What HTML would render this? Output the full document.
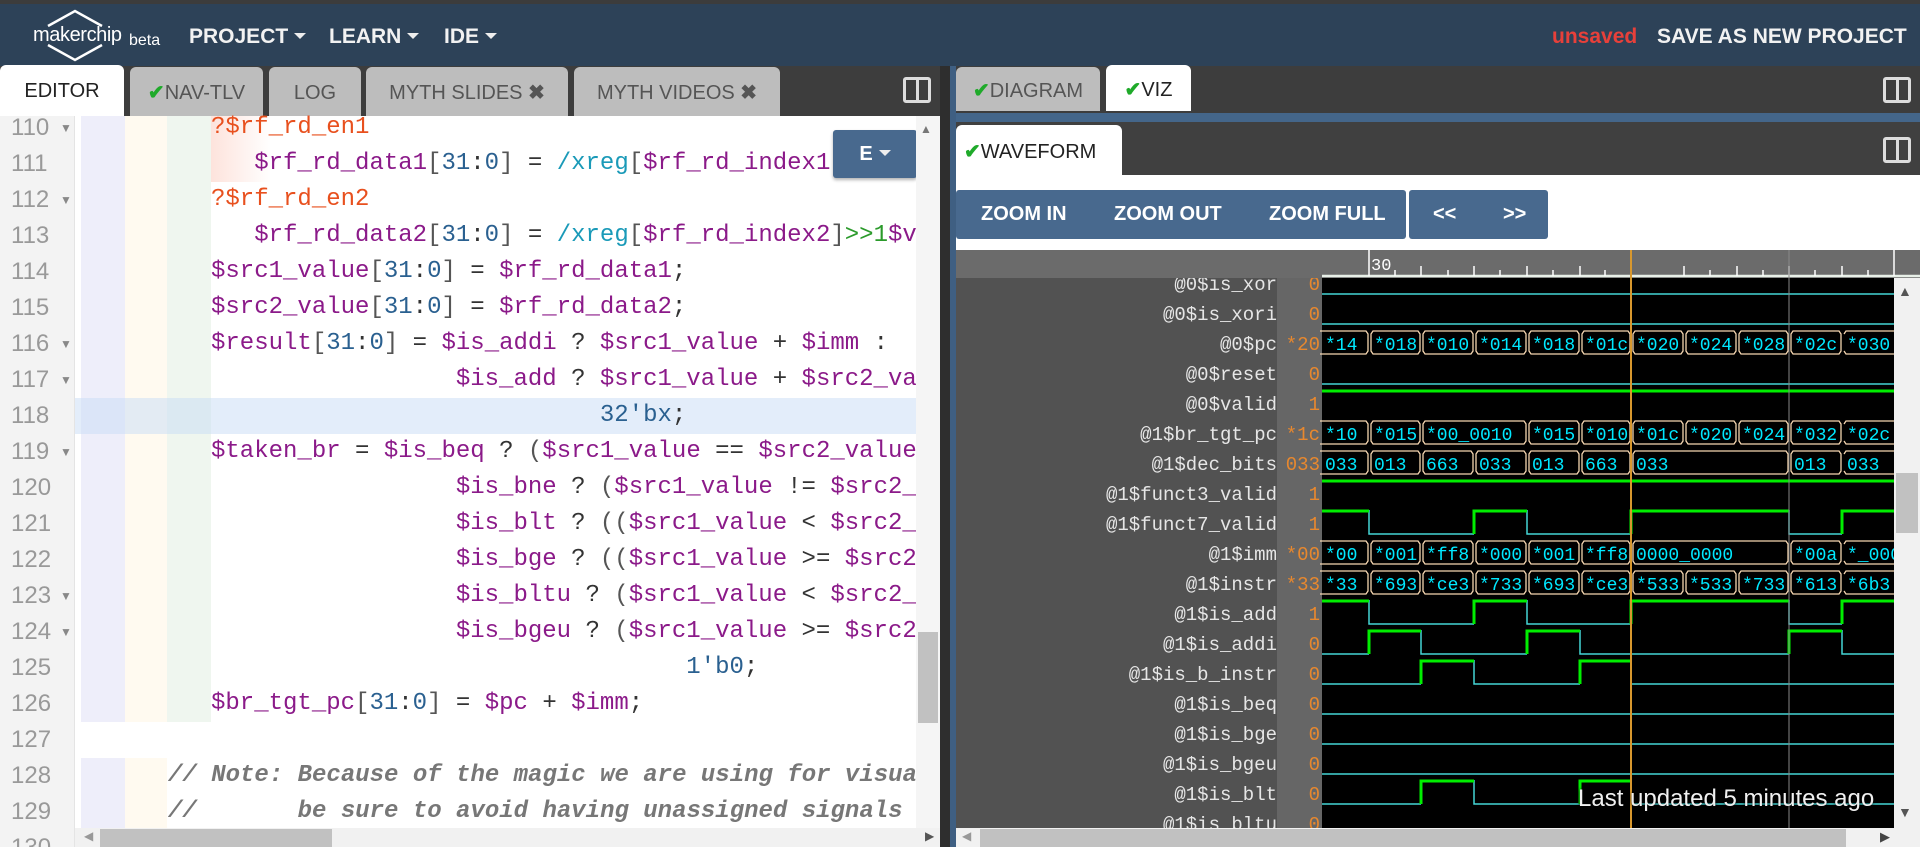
<!DOCTYPE html>
<html><head><meta charset="utf-8"><style>
*{margin:0;padding:0;box-sizing:border-box}
body{width:1920px;height:847px;overflow:hidden;position:relative;background:#3a3a3a;font-family:"Liberation Sans",sans-serif}
.a{position:absolute}
.nav{left:0;top:0;width:1920px;height:66px;background:#2d4258;border-top:4px solid #3c3c3c}
.nv{color:#f2f2f2;font-weight:bold;font-size:21px;top:25px}
.car{display:inline-block;width:0;height:0;border-left:6px solid transparent;border-right:6px solid transparent;border-top:6px solid #eee;vertical-align:middle;margin-left:6px;margin-top:-3px}
.tab{top:67px;height:49px;background:#bdbdbd;border-radius:6px 6px 0 0;color:#555;font-size:20px;line-height:52px;text-align:center}
.tab.w{background:#fff;color:#222;top:65px;height:51px}
.ck{color:#1faa2a;font-weight:bold}
.code{font-family:"Liberation Mono",monospace;font-size:24px;white-space:pre;line-height:36px;height:36px}
.ln{font-size:24px;color:#999;left:11px;line-height:36px;height:36px}
.fd{font-size:12px;color:#888;left:60px;line-height:36px}
.p{color:#8b1a89}.n{color:#2a6090}.g{color:#555}.t{color:#1a9ab8}.r{color:#e8501e}.gr{color:#2b9a2b}.o{color:#333}
.cm{color:#777;font-style:italic;font-weight:bold}
.btn{background:#48698e;border-radius:3px;color:#fff;font-weight:bold;font-size:20px;line-height:49px}
.nm{font-family:"Liberation Mono",monospace;font-size:19px;color:#e6e6e6;right:643px;line-height:30px;height:30px;white-space:pre}
.vl{font-family:"Liberation Mono",monospace;font-size:19px;color:#e8882e;right:600px;line-height:30px;height:30px}
.icon{width:28px;height:26px;border:3px solid #ddd;border-radius:3px}
.icon:after{content:"";position:absolute;left:10px;top:0;width:3px;height:20px;background:#ddd}
</style></head><body>
<div class="a nav"></div>
<svg class="a" style="left:0;top:0" width="170" height="66"><path d="M48 26 L75 11 L102 26 M48 45 L75 60 L102 45" stroke="#fff" stroke-width="2.5" fill="none"/></svg>
<div class="a" style="left:33px;top:24px;color:#fff;font-size:20px;letter-spacing:-0.4px">makerchip</div>
<div class="a" style="left:129px;top:32px;color:#fff;font-size:16px">beta</div>
<div class="a nv" style="left:189px">PROJECT<span class="car"></span></div>
<div class="a nv" style="left:329px">LEARN<span class="car"></span></div>
<div class="a nv" style="left:444px">IDE<span class="car"></span></div>
<div class="a" style="left:1552px;top:25px;color:#e8403a;font-size:21px;font-weight:bold">unsaved</div>
<div class="a nv" style="left:1657px">SAVE AS NEW PROJECT</div>

<div class="a" style="left:0;top:66px;width:940px;height:50px;background:#3d3d3d"></div>
<div class="a tab w" style="left:0;width:124px">EDITOR</div>
<div class="a tab" style="left:130px;width:133px"><span class="ck">✔</span>NAV-TLV</div>
<div class="a tab" style="left:269px;width:92px">LOG</div>
<div class="a tab" style="left:366px;width:202px">MYTH SLIDES <b style="color:#555">✖</b></div>
<div class="a tab" style="left:574px;width:206px">MYTH VIDEOS <b style="color:#555">✖</b></div>
<div class="a icon" style="left:903px;top:77px"></div>

<div class="a" style="left:0;top:116px;width:940px;height:731px;background:#fff;overflow:hidden">
 <div class="a" style="left:0;top:0;width:75px;height:731px;background:#f3f3f3;border-right:1px solid #e4e4e4"></div>
 <div class="a" style="left:81px;top:-6px;width:44px;height:612px;background:#eeeefa"></div>
 <div class="a" style="left:125px;top:-6px;width:42px;height:612px;background:#fffaf0"></div>
 <div class="a" style="left:167px;top:-6px;width:44px;height:612px;background:#eff6ef"></div>
 <div class="a" style="left:81px;top:642px;width:44px;height:90px;background:#eeeefa"></div>
 <div class="a" style="left:125px;top:642px;width:42px;height:90px;background:#fffaf0"></div>
 <div class="a" style="left:211px;top:-6px;width:60px;height:72px;background:linear-gradient(90deg,#fde3dc,#fff)"></div>
 <div class="a" style="left:75px;top:282px;width:841px;height:36px;background:rgba(200,220,245,0.5)"></div>
</div>
<div class="a" style="left:0;top:110px;width:940px;height:737px;overflow:hidden">
<div class="a ln" style="top:0">110</div><div class="a fd" style="top:0">▼</div>
<div class="a ln" style="top:36px">111</div>
<div class="a ln" style="top:72px">112</div><div class="a fd" style="top:72px">▼</div>
<div class="a ln" style="top:108px">113</div>
<div class="a ln" style="top:144px">114</div>
<div class="a ln" style="top:180px">115</div>
<div class="a ln" style="top:216px">116</div><div class="a fd" style="top:216px">▼</div>
<div class="a ln" style="top:252px">117</div><div class="a fd" style="top:252px">▼</div>
<div class="a ln" style="top:288px">118</div>
<div class="a ln" style="top:324px">119</div><div class="a fd" style="top:324px">▼</div>
<div class="a ln" style="top:360px">120</div>
<div class="a ln" style="top:396px">121</div>
<div class="a ln" style="top:432px">122</div>
<div class="a ln" style="top:468px">123</div><div class="a fd" style="top:468px">▼</div>
<div class="a ln" style="top:504px">124</div><div class="a fd" style="top:504px">▼</div>
<div class="a ln" style="top:540px">125</div>
<div class="a ln" style="top:576px">126</div>
<div class="a ln" style="top:612px">127</div>
<div class="a ln" style="top:648px">128</div>
<div class="a ln" style="top:684px">129</div>
<div class="a ln" style="top:720px">130</div>
<div class="a" style="left:168px;top:0;width:748px;height:720px;overflow:hidden">
<div class="a code" style="left:43px;top:0"><span class="r">?$rf_rd_en1</span></div>
<div class="a code" style="left:43px;top:36px">   <span class="p">$rf_rd_data1</span><span class="g">[</span><span class="n">31</span><span class="o">:</span><span class="n">0</span><span class="g">]</span> <span class="o">=</span> <span class="t">/xreg</span><span class="g">[</span><span class="p">$rf_rd_index1</span><span class="g">]</span><span class="gr">&gt;&gt;1</span><span class="p">$value</span></div>
<div class="a code" style="left:43px;top:72px"><span class="r">?$rf_rd_en2</span></div>
<div class="a code" style="left:43px;top:108px">   <span class="p">$rf_rd_data2</span><span class="g">[</span><span class="n">31</span><span class="o">:</span><span class="n">0</span><span class="g">]</span> <span class="o">=</span> <span class="t">/xreg</span><span class="g">[</span><span class="p">$rf_rd_index2</span><span class="g">]</span><span class="gr">&gt;&gt;1</span><span class="p">$value</span></div>
<div class="a code" style="left:43px;top:144px"><span class="p">$src1_value</span><span class="g">[</span><span class="n">31</span><span class="o">:</span><span class="n">0</span><span class="g">]</span> <span class="o">=</span> <span class="p">$rf_rd_data1</span><span class="o">;</span></div>
<div class="a code" style="left:43px;top:180px"><span class="p">$src2_value</span><span class="g">[</span><span class="n">31</span><span class="o">:</span><span class="n">0</span><span class="g">]</span> <span class="o">=</span> <span class="p">$rf_rd_data2</span><span class="o">;</span></div>
<div class="a code" style="left:43px;top:216px"><span class="p">$result</span><span class="g">[</span><span class="n">31</span><span class="o">:</span><span class="n">0</span><span class="g">]</span> <span class="o">=</span> <span class="p">$is_addi</span> <span class="o">?</span> <span class="p">$src1_value</span> <span class="o">+</span> <span class="p">$imm</span> <span class="o">:</span></div>
<div class="a code" style="left:43px;top:252px">                 <span class="p">$is_add</span> <span class="o">?</span> <span class="p">$src1_value</span> <span class="o">+</span> <span class="p">$src2_value</span> <span class="o">:</span></div>
<div class="a code" style="left:43px;top:288px">                           <span class="n">32'bx</span><span class="o">;</span></div>
<div class="a code" style="left:43px;top:324px"><span class="p">$taken_br</span> <span class="o">=</span> <span class="p">$is_beq</span> <span class="o">?</span> <span class="g">(</span><span class="p">$src1_value</span> <span class="o">==</span> <span class="p">$src2_value</span><span class="g">)</span> <span class="o">:</span></div>
<div class="a code" style="left:43px;top:360px">                 <span class="p">$is_bne</span> <span class="o">?</span> <span class="g">(</span><span class="p">$src1_value</span> <span class="o">!=</span> <span class="p">$src2_value</span><span class="g">)</span> <span class="o">:</span></div>
<div class="a code" style="left:43px;top:396px">                 <span class="p">$is_blt</span> <span class="o">?</span> <span class="g">((</span><span class="p">$src1_value</span> <span class="o">&lt;</span> <span class="p">$src2_value</span><span class="g">)</span></div>
<div class="a code" style="left:43px;top:432px">                 <span class="p">$is_bge</span> <span class="o">?</span> <span class="g">((</span><span class="p">$src1_value</span> <span class="o">&gt;=</span> <span class="p">$src2_value</span><span class="g">)</span></div>
<div class="a code" style="left:43px;top:468px">                 <span class="p">$is_bltu</span> <span class="o">?</span> <span class="g">(</span><span class="p">$src1_value</span> <span class="o">&lt;</span> <span class="p">$src2_value</span><span class="g">)</span></div>
<div class="a code" style="left:43px;top:504px">                 <span class="p">$is_bgeu</span> <span class="o">?</span> <span class="g">(</span><span class="p">$src1_value</span> <span class="o">&gt;=</span> <span class="p">$src2_value</span><span class="g">)</span></div>
<div class="a code" style="left:43px;top:540px">                                 <span class="n">1'b0</span><span class="o">;</span></div>
<div class="a code" style="left:43px;top:576px"><span class="p">$br_tgt_pc</span><span class="g">[</span><span class="n">31</span><span class="o">:</span><span class="n">0</span><span class="g">]</span> <span class="o">=</span> <span class="p">$pc</span> <span class="o">+</span> <span class="p">$imm</span><span class="o">;</span></div>
<div class="a code cm" style="left:0;top:648px">// Note: Because of the magic we are using for visualisation</div>
<div class="a code cm" style="left:0;top:684px">//       be sure to avoid having unassigned signals</div>
</div>
</div>
<div class="a btn" style="left:833px;top:130px;width:84px;height:48px;text-align:center;box-shadow:0 2px 3px rgba(0,0,0,.3)">E<span class="car"></span></div>
<div class="a" style="left:916px;top:116px;width:24px;height:712px;background:#f5f5f5"></div>
<div class="a" style="left:920px;top:122px;color:#777;font-size:12px">▲</div>
<div class="a" style="left:918px;top:632px;width:20px;height:91px;background:#c1c1c1"></div>
<div class="a" style="left:75px;top:828px;width:865px;height:19px;background:#f1f1f1"></div>
<div class="a" style="left:100px;top:829px;width:232px;height:18px;background:#c1c1c1"></div>
<div class="a" style="left:84px;top:829px;color:#999;font-size:12px">◀</div>
<div class="a" style="left:925px;top:829px;color:#555;font-size:12px">▶</div>

<div class="a" style="left:940px;top:66px;width:10px;height:781px;background:#2e2e2e"></div>
<div class="a" style="left:950px;top:66px;width:6px;height:781px;background:#3f5f82"></div>

<div class="a" style="left:956px;top:66px;width:964px;height:47px;background:#3d3d3d"></div>
<div class="a tab" style="left:956px;top:67px;width:144px;height:44px;line-height:48px;color:#555"><span class="ck">✔</span>DIAGRAM</div>
<div class="a tab w" style="left:1106px;top:65px;width:85px;height:46px;line-height:50px"><span class="ck">✔</span>VIZ</div>
<div class="a icon" style="left:1883px;top:77px"></div>
<div class="a" style="left:956px;top:113px;width:964px;height:9px;background:#44668a"></div>
<div class="a" style="left:956px;top:122px;width:964px;height:53px;background:#404040"></div>
<div class="a tab w" style="left:956px;top:125px;width:166px;height:50px;line-height:54px;text-align:left;padding-left:8px"><span class="ck">✔</span>WAVEFORM</div>
<div class="a icon" style="left:1883px;top:137px"></div>
<div class="a" style="left:956px;top:175px;width:964px;height:75px;background:#fff"></div>
<div class="a btn" style="left:956px;top:190px;width:450px;height:49px"><span class="a" style="left:25px">ZOOM IN</span><span class="a" style="left:158px">ZOOM OUT</span><span class="a" style="left:313px">ZOOM FULL</span></div>
<div class="a btn" style="left:1409px;top:190px;width:139px;height:49px"><span class="a" style="left:24px">&lt;&lt;</span><span class="a" style="left:94px">&gt;&gt;</span></div>

<div class="a" style="left:956px;top:250px;width:964px;height:28px;background:#6b6b6b"></div>
<div class="a" style="left:956px;top:278px;width:321px;height:550px;background:#525252"></div>
<div class="a" style="left:1277px;top:278px;width:45px;height:550px;background:#666"></div>
<div class="a" style="left:956px;top:278px;width:964px;height:550px;overflow:hidden">
<div class="a nm" style="top:-8px">@0$is_xor</div><div class="a vl" style="top:-8px">0</div>
<div class="a nm" style="top:22px">@0$is_xori</div><div class="a vl" style="top:22px">0</div>
<div class="a nm" style="top:52px">@0$pc</div><div class="a vl" style="top:52px">*20</div>
<div class="a nm" style="top:82px">@0$reset</div><div class="a vl" style="top:82px">0</div>
<div class="a nm" style="top:112px">@0$valid</div><div class="a vl" style="top:112px">1</div>
<div class="a nm" style="top:142px">@1$br_tgt_pc</div><div class="a vl" style="top:142px">*1c</div>
<div class="a nm" style="top:172px">@1$dec_bits</div><div class="a vl" style="top:172px">033</div>
<div class="a nm" style="top:202px">@1$funct3_valid</div><div class="a vl" style="top:202px">1</div>
<div class="a nm" style="top:232px">@1$funct7_valid</div><div class="a vl" style="top:232px">1</div>
<div class="a nm" style="top:262px">@1$imm</div><div class="a vl" style="top:262px">*00</div>
<div class="a nm" style="top:292px">@1$instr</div><div class="a vl" style="top:292px">*33</div>
<div class="a nm" style="top:322px">@1$is_add</div><div class="a vl" style="top:322px">1</div>
<div class="a nm" style="top:352px">@1$is_addi</div><div class="a vl" style="top:352px">0</div>
<div class="a nm" style="top:382px">@1$is_b_instr</div><div class="a vl" style="top:382px">0</div>
<div class="a nm" style="top:412px">@1$is_beq</div><div class="a vl" style="top:412px">0</div>
<div class="a nm" style="top:442px">@1$is_bge</div><div class="a vl" style="top:442px">0</div>
<div class="a nm" style="top:472px">@1$is_bgeu</div><div class="a vl" style="top:472px">0</div>
<div class="a nm" style="top:502px">@1$is_blt</div><div class="a vl" style="top:502px">0</div>
<div class="a nm" style="top:532px">@1$is_bltu</div><div class="a vl" style="top:532px">0</div>
</div>
<svg class="a" style="left:0;top:0" width="1920" height="847" font-family="Liberation Mono, monospace" font-size="18">
<rect x="1322" y="278" width="572" height="550" fill="#000"/>
<g stroke="#fff" stroke-width="1.5">
<line x1="1322" y1="276" x2="1920" y2="276" stroke="#e8f0e8" stroke-width="2.5"/>
<line x1="1369" y1="250" x2="1369" y2="276"/>
<line x1="1894" y1="250" x2="1894" y2="276"/>
<path d="M1395 270V276M1421 266V276M1448 270V276M1474 266V276M1500 270V276M1527 266V276M1553 270V276M1580 266V276M1605 270V276M1684 266V276M1710 270V276M1737 266V276M1763 270V276M1789 266V276M1815 270V276M1842 266V276M1868 270V276"/>
</g>
<text x="1371" y="270" fill="#fff" font-size="17">30</text>
<g stroke="#44d6d6" stroke-width="1.5" fill="none">
<path d="M1322 294H1894M1322 324H1894M1322 384H1894M1322 714H1894M1322 744H1894M1322 774H1894"/>
<path d="M1369 510V534H1474M1527 510V534H1631M1789 510V534H1842"/>
<path d="M1369 600V624H1474M1527 600V624H1631M1789 600V624H1842"/>
<path d="M1322 654H1369M1421 630V654H1527M1580 630V654H1789M1842 630V654H1894"/>
<path d="M1322 684H1421M1474 660V684H1580M1631 660V684H1894"/>
<path d="M1322 804H1421M1474 780V804H1580M1631 780V804H1894"/>
</g>
<g stroke="#00ee00" stroke-width="3" fill="none">
<path d="M1322 391H1894M1322 481H1894"/>
<path d="M1322 511H1369M1474 534V511H1527M1631 534V511H1789M1842 534V511H1894"/>
<path d="M1322 601H1369M1474 624V601H1527M1631 624V601H1789M1842 624V601H1894"/>
<path d="M1369 654V631H1421M1527 654V631H1580M1789 654V631H1842"/>
<path d="M1421 684V661H1474M1580 684V661H1631"/>
<path d="M1421 804V781H1474M1580 804V781H1631"/>
</g>
<g stroke="#f5d6b0" stroke-width="1.3" fill="none">
<path d="M1320 331H1366L1368 334V351L1366 354H1320M1371 334L1373 331H1418L1420 334V351L1418 354H1373L1371 351ZM1423 334L1425 331H1471L1473 334V351L1471 354H1425L1423 351ZM1476 334L1478 331H1524L1526 334V351L1524 354H1478L1476 351ZM1529 334L1531 331H1577L1579 334V351L1577 354H1531L1529 351ZM1582 334L1584 331H1628L1630 334V351L1628 354H1584L1582 351ZM1633 334L1635 331H1681L1683 334V351L1681 354H1635L1633 351ZM1686 334L1688 331H1734L1736 334V351L1734 354H1688L1686 351ZM1739 334L1741 331H1786L1788 334V351L1786 354H1741L1739 351ZM1791 334L1793 331H1839L1841 334V351L1839 354H1793L1791 351ZM1844 334L1846 331H1894M1844 351L1846 354H1894"/>
<path transform="translate(0,90)" d="M1320 331H1366L1368 334V351L1366 354H1320M1371 334L1373 331H1418L1420 334V351L1418 354H1373L1371 351ZM1423 334L1425 331H1524L1526 334V351L1524 354H1425L1423 351ZM1529 334L1531 331H1577L1579 334V351L1577 354H1531L1529 351ZM1582 334L1584 331H1628L1630 334V351L1628 354H1584L1582 351ZM1633 334L1635 331H1681L1683 334V351L1681 354H1635L1633 351ZM1686 334L1688 331H1734L1736 334V351L1734 354H1688L1686 351ZM1739 334L1741 331H1786L1788 334V351L1786 354H1741L1739 351ZM1791 334L1793 331H1839L1841 334V351L1839 354H1793L1791 351ZM1844 334L1846 331H1894M1844 351L1846 354H1894"/>
<path transform="translate(0,120)" d="M1320 331H1366L1368 334V351L1366 354H1320M1371 334L1373 331H1418L1420 334V351L1418 354H1373L1371 351ZM1423 334L1425 331H1471L1473 334V351L1471 354H1425L1423 351ZM1476 334L1478 331H1524L1526 334V351L1524 354H1478L1476 351ZM1529 334L1531 331H1577L1579 334V351L1577 354H1531L1529 351ZM1582 334L1584 331H1628L1630 334V351L1628 354H1584L1582 351ZM1633 334L1635 331H1786L1788 334V351L1786 354H1635L1633 351ZM1791 334L1793 331H1839L1841 334V351L1839 354H1793L1791 351ZM1844 334L1846 331H1894M1844 351L1846 354H1894"/>
<path transform="translate(0,210)" d="M1320 331H1366L1368 334V351L1366 354H1320M1371 334L1373 331H1418L1420 334V351L1418 354H1373L1371 351ZM1423 334L1425 331H1471L1473 334V351L1471 354H1425L1423 351ZM1476 334L1478 331H1524L1526 334V351L1524 354H1478L1476 351ZM1529 334L1531 331H1577L1579 334V351L1577 354H1531L1529 351ZM1582 334L1584 331H1628L1630 334V351L1628 354H1584L1582 351ZM1633 334L1635 331H1786L1788 334V351L1786 354H1635L1633 351ZM1791 334L1793 331H1839L1841 334V351L1839 354H1793L1791 351ZM1844 334L1846 331H1894M1844 351L1846 354H1894"/>
<path transform="translate(0,240)" d="M1320 331H1366L1368 334V351L1366 354H1320M1371 334L1373 331H1418L1420 334V351L1418 354H1373L1371 351ZM1423 334L1425 331H1471L1473 334V351L1471 354H1425L1423 351ZM1476 334L1478 331H1524L1526 334V351L1524 354H1478L1476 351ZM1529 334L1531 331H1577L1579 334V351L1577 354H1531L1529 351ZM1582 334L1584 331H1628L1630 334V351L1628 354H1584L1582 351ZM1633 334L1635 331H1681L1683 334V351L1681 354H1635L1633 351ZM1686 334L1688 331H1734L1736 334V351L1734 354H1688L1686 351ZM1739 334L1741 331H1786L1788 334V351L1786 354H1741L1739 351ZM1791 334L1793 331H1839L1841 334V351L1839 354H1793L1791 351ZM1844 334L1846 331H1894M1844 351L1846 354H1894"/>
</g>
<g fill="#00e8ff">
<text y="350"><tspan x="1325">*14</tspan><tspan x="1374">*018</tspan><tspan x="1426">*010</tspan><tspan x="1479">*014</tspan><tspan x="1532">*018</tspan><tspan x="1585">*01c</tspan><tspan x="1636">*020</tspan><tspan x="1689">*024</tspan><tspan x="1742">*028</tspan><tspan x="1794">*02c</tspan><tspan x="1847">*030</tspan></text>
<text y="440"><tspan x="1325">*10</tspan><tspan x="1374">*015</tspan><tspan x="1426">*00_0010</tspan><tspan x="1532">*015</tspan><tspan x="1585">*010</tspan><tspan x="1636">*01c</tspan><tspan x="1689">*020</tspan><tspan x="1742">*024</tspan><tspan x="1794">*032</tspan><tspan x="1847">*02c</tspan></text>
<text y="470"><tspan x="1325">033</tspan><tspan x="1374">013</tspan><tspan x="1426">663</tspan><tspan x="1479">033</tspan><tspan x="1532">013</tspan><tspan x="1585">663</tspan><tspan x="1636">033</tspan><tspan x="1794">013</tspan><tspan x="1847">033</tspan></text>
<text y="560"><tspan x="1325">*00</tspan><tspan x="1374">*001</tspan><tspan x="1426">*ff8</tspan><tspan x="1479">*000</tspan><tspan x="1532">*001</tspan><tspan x="1585">*ff8</tspan><tspan x="1636">0000_0000</tspan><tspan x="1794">*00a</tspan><tspan x="1847">*_000</tspan></text>
<text y="590"><tspan x="1325">*33</tspan><tspan x="1374">*693</tspan><tspan x="1426">*ce3</tspan><tspan x="1479">*733</tspan><tspan x="1532">*693</tspan><tspan x="1585">*ce3</tspan><tspan x="1636">*533</tspan><tspan x="1689">*533</tspan><tspan x="1742">*733</tspan><tspan x="1794">*613</tspan><tspan x="1847">*6b3</tspan></text>
</g>
<line x1="1789" y1="250" x2="1789" y2="828" stroke="#888" stroke-width="1"/>
<line x1="1631" y1="250" x2="1631" y2="828" stroke="#d8982e" stroke-width="2"/>
</svg>
<div class="a" style="left:1578px;top:785px;color:#f0f0f0;font-size:24px;text-shadow:0 0 3px #000">Last updated 5 minutes ago</div>
<div class="a" style="left:1894px;top:278px;width:26px;height:550px;background:#f1f1f1"></div>
<div class="a" style="left:1898px;top:283px;color:#555;font-size:14px">▲</div>
<div class="a" style="left:1898px;top:804px;color:#555;font-size:14px">▼</div>
<div class="a" style="left:1896px;top:473px;width:22px;height:60px;background:#c1c1c1"></div>
<div class="a" style="left:956px;top:828px;width:964px;height:19px;background:#f1f1f1"></div>
<div class="a" style="left:980px;top:829px;width:866px;height:18px;background:#c1c1c1"></div>
<div class="a" style="left:962px;top:829px;color:#999;font-size:12px">◀</div>
<div class="a" style="left:1880px;top:829px;color:#444;font-size:13px">▶</div>
</body></html>
